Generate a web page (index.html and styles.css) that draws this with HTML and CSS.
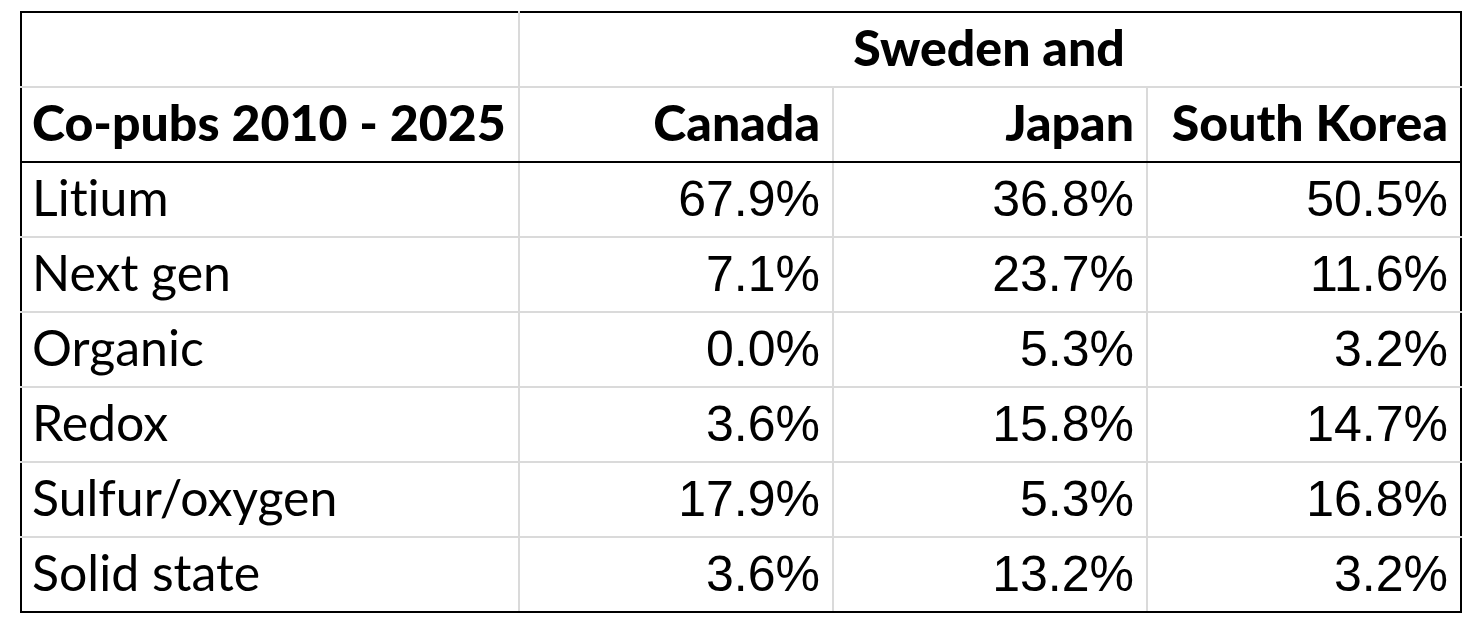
FILE: index.html
```html
<!DOCTYPE html>
<html lang="en">
<head>
<meta charset="utf-8">
<title>Co-pubs table</title>
<link rel="stylesheet" href="styles.css">
</head>
<body>
<table class="pubs">
  <colgroup>
    <col class="c-label">
    <col class="c-num">
    <col class="c-num">
    <col class="c-num">
  </colgroup>
  <thead>
    <tr class="row-top">
      <th class="empty"></th>
      <th class="group" colspan="3">Sweden and</th>
    </tr>
    <tr class="row-head">
      <th class="label">Co-pubs 2010 - 2025</th>
      <th class="num">Canada</th>
      <th class="num">Japan</th>
      <th class="num">South Korea</th>
    </tr>
  </thead>
  <tbody>
    <tr><td class="label">Litium</td><td class="num">67.9%</td><td class="num">36.8%</td><td class="num">50.5%</td></tr>
    <tr><td class="label">Next gen</td><td class="num">7.1%</td><td class="num">23.7%</td><td class="num">11.6%</td></tr>
    <tr><td class="label">Organic</td><td class="num">0.0%</td><td class="num">5.3%</td><td class="num">3.2%</td></tr>
    <tr><td class="label">Redox</td><td class="num">3.6%</td><td class="num">15.8%</td><td class="num">14.7%</td></tr>
    <tr><td class="label">Sulfur/oxygen</td><td class="num">17.9%</td><td class="num">5.3%</td><td class="num">16.8%</td></tr>
    <tr><td class="label">Solid state</td><td class="num">3.6%</td><td class="num">13.2%</td><td class="num">3.2%</td></tr>
  </tbody>
</table>
</body>
</html>
```
FILE: styles.css
```css
html, body {
  margin: 0;
  padding: 0;
  background: #ffffff;
}

body {
  padding: 11px 0 0 20px;
}

.pubs {
  border-collapse: collapse;
  table-layout: fixed;
  width: 1440px;
  border: 2px solid #000;
  color: #000;
  font-variant-ligatures: none;
  font-feature-settings: "liga" 0, "clig" 0;
}

.c-label { width: 498px; }
.c-num { width: 314px; }

.pubs th,
.pubs td {
  height: 75px;
  box-sizing: border-box;
  padding: 0 12px 14px 10px;
  vertical-align: bottom;
  border: 2px solid #dadada;
  line-height: 1;
  white-space: nowrap;
}

.pubs th {
  font-family: "Lato", "Liberation Sans", sans-serif;
  font-weight: 900;
  font-size: 50px;
}

.pubs td.label {
  font-family: "Lato", "Liberation Sans", sans-serif;
  font-weight: 400;
  font-size: 50px;
  text-align: left;
}

.pubs th.label {
  text-align: left;
}

.pubs .num {
  text-align: right;
}

.pubs td.num {
  font-family: "Liberation Sans", Arial, sans-serif;
  font-size: 50px;
  padding-bottom: 12px;
}

.pubs .group {
  text-align: center;
}

.row-top th {
  border-top: 2px solid #000;
}

.row-head th {
  border-bottom: 2px solid #000;
}

.pubs tr > :first-child {
  border-left: 2px solid #000;
}

.pubs tr > :last-child {
  border-right: 2px solid #000;
}

.pubs tbody tr:last-child td {
  border-bottom: 2px solid #000;
}
```
